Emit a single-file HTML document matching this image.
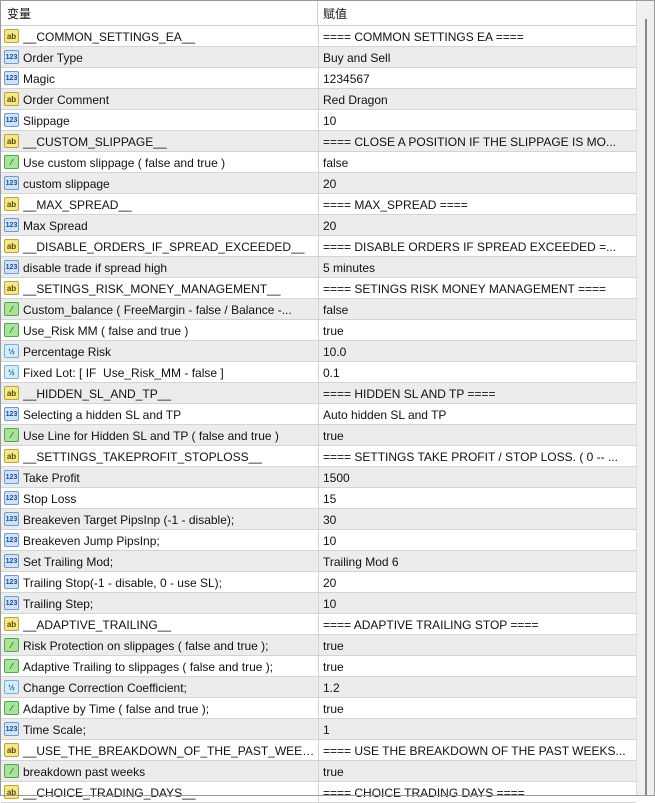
<!DOCTYPE html><html><head><meta charset="utf-8"><style>
*{margin:0;padding:0;box-sizing:border-box}
body{width:655px;height:796px;overflow:hidden;background:#fff;font-family:"Liberation Sans","Noto Sans CJK SC",sans-serif;font-size:12px;color:#111;position:relative}
.frame{position:absolute;left:0;top:0;width:655px;height:796px;border:1px solid #999;pointer-events:none}
.hdr{position:absolute;left:1px;top:1px;width:635px;height:25px;background:#fff;border-bottom:1px solid #ccc}
.hdr span{position:absolute;top:4px}
.rows{position:absolute;left:1px;top:26px;width:635px}
.r{height:21px;position:relative;border-bottom:1px solid #d4d4d4;white-space:nowrap}
.r.g{background:#ececec}
.r .ic{position:absolute;left:3px;top:3px;width:15px;height:14px;border-radius:2px;font-size:8px;line-height:13px;text-align:center;font-weight:bold}
.ab{background:#f5e88a;border:1px solid #b9a640;color:#5a4a00}
.n{background:#cfe2f6;border:1px solid #6f9bd0;color:#1e4f9a;font-size:7px!important}
.d{background:#d4ecf8;border:1px solid #6fb3d6;color:#1e6e9a}
.b{background:#a9e39b;border:1px solid #4fa944;color:#1d6a1d}
.r .k{position:absolute;left:22px;top:4px;width:292px;overflow:hidden;text-overflow:ellipsis}
.r .v{position:absolute;left:317px;top:0;height:21px;border-left:1px solid #d4d4d4;padding:4px 0 0 4px;width:318px;overflow:hidden}
.sb{position:absolute;left:636px;top:1px;width:18px;height:794px;background:#f0f0f0;border-left:1px solid #ddd}
.sb div{position:absolute;left:8px;top:18px;width:2px;height:776px;background:#888}
</style></head><body>
<div class="hdr"><span style="left:6px">变量</span><span style="left:322px">赋值</span><div style="position:absolute;left:316px;top:0;height:25px;border-left:1px solid #ccc"></div></div>
<div class="rows">
<div class="r"><span class="ic ab">ab</span><span class="k">__COMMON_SETTINGS_EA__</span><span class="v">==== COMMON SETTINGS EA ====</span></div>
<div class="r g"><span class="ic n">123</span><span class="k">Order Type</span><span class="v">Buy and Sell</span></div>
<div class="r"><span class="ic n">123</span><span class="k">Magic</span><span class="v">1234567</span></div>
<div class="r g"><span class="ic ab">ab</span><span class="k">Order Comment</span><span class="v">Red Dragon</span></div>
<div class="r"><span class="ic n">123</span><span class="k">Slippage</span><span class="v">10</span></div>
<div class="r g"><span class="ic ab">ab</span><span class="k">__CUSTOM_SLIPPAGE__</span><span class="v">==== CLOSE A POSITION IF THE SLIPPAGE IS MO...</span></div>
<div class="r"><span class="ic b">⁄</span><span class="k">Use custom slippage ( false and true )</span><span class="v">false</span></div>
<div class="r g"><span class="ic n">123</span><span class="k">custom slippage</span><span class="v">20</span></div>
<div class="r"><span class="ic ab">ab</span><span class="k">__MAX_SPREAD__</span><span class="v">==== MAX_SPREAD ====</span></div>
<div class="r g"><span class="ic n">123</span><span class="k">Max Spread</span><span class="v">20</span></div>
<div class="r"><span class="ic ab">ab</span><span class="k">__DISABLE_ORDERS_IF_SPREAD_EXCEEDED__</span><span class="v">==== DISABLE ORDERS IF SPREAD EXCEEDED =...</span></div>
<div class="r g"><span class="ic n">123</span><span class="k">disable trade if spread high</span><span class="v">5 minutes</span></div>
<div class="r"><span class="ic ab">ab</span><span class="k">__SETINGS_RISK_MONEY_MANAGEMENT__</span><span class="v">==== SETINGS RISK MONEY MANAGEMENT ====</span></div>
<div class="r g"><span class="ic b">⁄</span><span class="k">Custom_balance ( FreeMargin - false / Balance -...</span><span class="v">false</span></div>
<div class="r"><span class="ic b">⁄</span><span class="k">Use_Risk MM ( false and true )</span><span class="v">true</span></div>
<div class="r g"><span class="ic d">½</span><span class="k">Percentage Risk</span><span class="v">10.0</span></div>
<div class="r"><span class="ic d">½</span><span class="k">Fixed Lot: [ IF &nbsp;Use_Risk_MM - false ]</span><span class="v">0.1</span></div>
<div class="r g"><span class="ic ab">ab</span><span class="k">__HIDDEN_SL_AND_TP__</span><span class="v">==== HIDDEN SL AND TP ====</span></div>
<div class="r"><span class="ic n">123</span><span class="k">Selecting a hidden SL and TP</span><span class="v">Auto hidden SL and TP</span></div>
<div class="r g"><span class="ic b">⁄</span><span class="k">Use Line for Hidden SL and TP ( false and true )</span><span class="v">true</span></div>
<div class="r"><span class="ic ab">ab</span><span class="k">__SETTINGS_TAKEPROFIT_STOPLOSS__</span><span class="v">==== SETTINGS TAKE PROFIT / STOP LOSS. ( 0 -- ...</span></div>
<div class="r g"><span class="ic n">123</span><span class="k">Take Profit</span><span class="v">1500</span></div>
<div class="r"><span class="ic n">123</span><span class="k">Stop Loss</span><span class="v">15</span></div>
<div class="r g"><span class="ic n">123</span><span class="k">Breakeven Target PipsInp (-1 - disable);</span><span class="v">30</span></div>
<div class="r"><span class="ic n">123</span><span class="k">Breakeven Jump PipsInp;</span><span class="v">10</span></div>
<div class="r g"><span class="ic n">123</span><span class="k">Set Trailing Mod;</span><span class="v">Trailing Mod 6</span></div>
<div class="r"><span class="ic n">123</span><span class="k">Trailing Stop(-1 - disable, 0 - use SL);</span><span class="v">20</span></div>
<div class="r g"><span class="ic n">123</span><span class="k">Trailing Step;</span><span class="v">10</span></div>
<div class="r"><span class="ic ab">ab</span><span class="k">__ADAPTIVE_TRAILING__</span><span class="v">==== ADAPTIVE TRAILING STOP ====</span></div>
<div class="r g"><span class="ic b">⁄</span><span class="k">Risk Protection on slippages ( false and true );</span><span class="v">true</span></div>
<div class="r"><span class="ic b">⁄</span><span class="k">Adaptive Trailing to slippages ( false and true );</span><span class="v">true</span></div>
<div class="r g"><span class="ic d">½</span><span class="k">Change Correction Coefficient;</span><span class="v">1.2</span></div>
<div class="r"><span class="ic b">⁄</span><span class="k">Adaptive by Time ( false and true );</span><span class="v">true</span></div>
<div class="r g"><span class="ic n">123</span><span class="k">Time Scale;</span><span class="v">1</span></div>
<div class="r"><span class="ic ab">ab</span><span class="k">__USE_THE_BREAKDOWN_OF_THE_PAST_WEEKS...</span><span class="v">==== USE THE BREAKDOWN OF THE PAST WEEKS...</span></div>
<div class="r g"><span class="ic b">⁄</span><span class="k">breakdown past weeks</span><span class="v">true</span></div>
<div class="r"><span class="ic ab">ab</span><span class="k">__CHOICE_TRADING_DAYS__</span><span class="v">==== CHOICE TRADING DAYS ====</span></div>
</div>
<div class="sb"><div></div></div>
<div class="frame"></div>
</body></html>
